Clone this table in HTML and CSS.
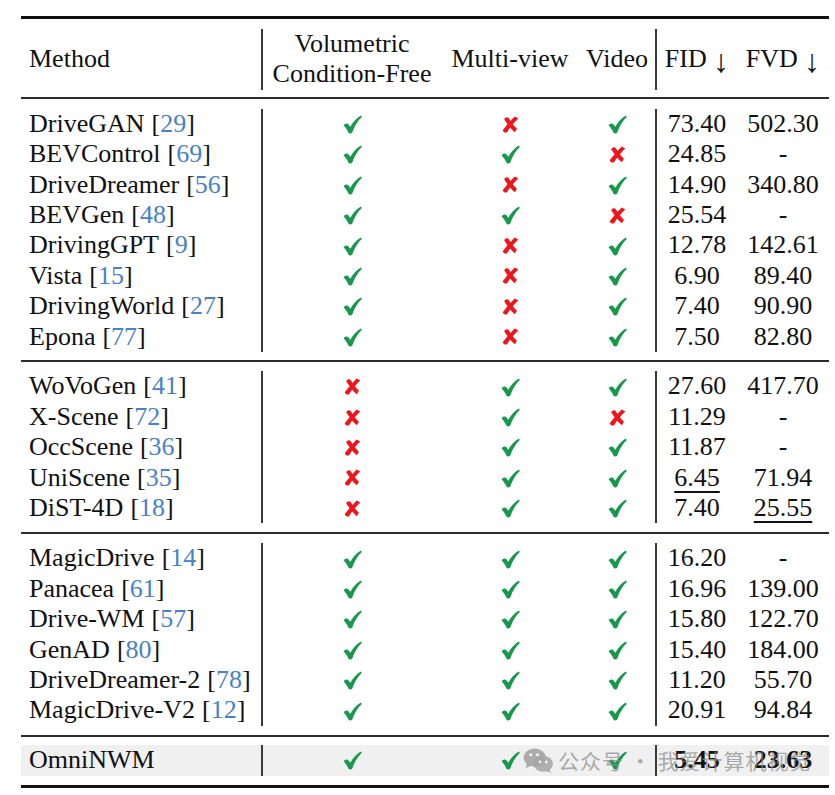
FILE: index.html
```html
<!DOCTYPE html>
<html lang="en">
<head>
<meta charset="utf-8">
<title>Comparison table</title>
<link rel="stylesheet" href="styles.css">
</head>
<body>
<svg class="defs" width="0" height="0" aria-hidden="true">
  <symbol id="ok" viewBox="0 0 20 20">
    <path d="M0.6 10.8 C2.2 9 4.2 8.4 5.4 9.6 L7.7 12.4 C10.4 7.6 13.8 3.4 18.8 0.4 L19.8 2 C15.4 6 12.2 11.2 9.8 18.4 C8.8 19.6 6.6 19.8 5.8 18.6 C4.4 15.6 2.8 13 0.6 10.8 Z"/>
  </symbol>
  <symbol id="no" viewBox="0 0 18 18">
    <path d="M0.8 15 C4.6 10.2 8.6 5.2 13.4 0.4 L17.2 2.6 C12.4 7.2 8.4 11.8 5.2 17.4 C3.4 18 1.4 17.2 0.8 15 Z"/>
    <path d="M2.4 3.6 C3.2 1 5.8 0.4 7.2 2.4 C9.6 6.4 12.2 10.2 15.8 13.6 L13.6 17.2 C9.8 14 6.6 9.8 2.4 3.6 Z"/>
  </symbol>
</svg>

<div class="page">
  <div class="table">
    <div class="head">
      <div class="row hrow">
        <div class="cell m">Method</div>
        <div class="cell c vl two">Volumetric<br>Condition-Free</div>
        <div class="cell c">Multi-view</div>
        <div class="cell c">Video</div>
        <div class="cell c vl">FID&nbsp;<span class="arr">↓</span></div>
        <div class="cell c">FVD&nbsp;<span class="arr">↓</span></div>
      </div>
    </div>

    <div class="section s1">
      <div class="row"><div class="cell m">DriveGAN <span class="ref">[<span>29</span>]</span></div><div class="cell c vl"><svg class="ok"><use href="#ok"/></svg></div><div class="cell c"><svg class="no"><use href="#no"/></svg></div><div class="cell c"><svg class="ok"><use href="#ok"/></svg></div><div class="cell c vl">73.40</div><div class="cell c">502.30</div></div>
      <div class="row"><div class="cell m">BEVControl <span class="ref">[<span>69</span>]</span></div><div class="cell c vl"><svg class="ok"><use href="#ok"/></svg></div><div class="cell c"><svg class="ok"><use href="#ok"/></svg></div><div class="cell c"><svg class="no"><use href="#no"/></svg></div><div class="cell c vl">24.85</div><div class="cell c">-</div></div>
      <div class="row"><div class="cell m">DriveDreamer <span class="ref">[<span>56</span>]</span></div><div class="cell c vl"><svg class="ok"><use href="#ok"/></svg></div><div class="cell c"><svg class="no"><use href="#no"/></svg></div><div class="cell c"><svg class="ok"><use href="#ok"/></svg></div><div class="cell c vl">14.90</div><div class="cell c">340.80</div></div>
      <div class="row"><div class="cell m">BEVGen <span class="ref">[<span>48</span>]</span></div><div class="cell c vl"><svg class="ok"><use href="#ok"/></svg></div><div class="cell c"><svg class="ok"><use href="#ok"/></svg></div><div class="cell c"><svg class="no"><use href="#no"/></svg></div><div class="cell c vl">25.54</div><div class="cell c">-</div></div>
      <div class="row"><div class="cell m">DrivingGPT <span class="ref">[<span>9</span>]</span></div><div class="cell c vl"><svg class="ok"><use href="#ok"/></svg></div><div class="cell c"><svg class="no"><use href="#no"/></svg></div><div class="cell c"><svg class="ok"><use href="#ok"/></svg></div><div class="cell c vl">12.78</div><div class="cell c">142.61</div></div>
      <div class="row"><div class="cell m">Vista <span class="ref">[<span>15</span>]</span></div><div class="cell c vl"><svg class="ok"><use href="#ok"/></svg></div><div class="cell c"><svg class="no"><use href="#no"/></svg></div><div class="cell c"><svg class="ok"><use href="#ok"/></svg></div><div class="cell c vl">6.90</div><div class="cell c">89.40</div></div>
      <div class="row"><div class="cell m">DrivingWorld <span class="ref">[<span>27</span>]</span></div><div class="cell c vl"><svg class="ok"><use href="#ok"/></svg></div><div class="cell c"><svg class="no"><use href="#no"/></svg></div><div class="cell c"><svg class="ok"><use href="#ok"/></svg></div><div class="cell c vl">7.40</div><div class="cell c">90.90</div></div>
      <div class="row"><div class="cell m">Epona <span class="ref">[<span>77</span>]</span></div><div class="cell c vl"><svg class="ok"><use href="#ok"/></svg></div><div class="cell c"><svg class="no"><use href="#no"/></svg></div><div class="cell c"><svg class="ok"><use href="#ok"/></svg></div><div class="cell c vl">7.50</div><div class="cell c">82.80</div></div>
    </div>

    <div class="section">
      <div class="row"><div class="cell m">WoVoGen <span class="ref">[<span>41</span>]</span></div><div class="cell c vl"><svg class="no"><use href="#no"/></svg></div><div class="cell c"><svg class="ok"><use href="#ok"/></svg></div><div class="cell c"><svg class="ok"><use href="#ok"/></svg></div><div class="cell c vl">27.60</div><div class="cell c">417.70</div></div>
      <div class="row"><div class="cell m">X-Scene <span class="ref">[<span>72</span>]</span></div><div class="cell c vl"><svg class="no"><use href="#no"/></svg></div><div class="cell c"><svg class="ok"><use href="#ok"/></svg></div><div class="cell c"><svg class="no"><use href="#no"/></svg></div><div class="cell c vl">11.29</div><div class="cell c">-</div></div>
      <div class="row"><div class="cell m">OccScene <span class="ref">[<span>36</span>]</span></div><div class="cell c vl"><svg class="no"><use href="#no"/></svg></div><div class="cell c"><svg class="ok"><use href="#ok"/></svg></div><div class="cell c"><svg class="ok"><use href="#ok"/></svg></div><div class="cell c vl">11.87</div><div class="cell c">-</div></div>
      <div class="row"><div class="cell m">UniScene <span class="ref">[<span>35</span>]</span></div><div class="cell c vl"><svg class="no"><use href="#no"/></svg></div><div class="cell c"><svg class="ok"><use href="#ok"/></svg></div><div class="cell c"><svg class="ok"><use href="#ok"/></svg></div><div class="cell c vl"><span class="u">6.45</span></div><div class="cell c">71.94</div></div>
      <div class="row"><div class="cell m">DiST-4D <span class="ref">[<span>18</span>]</span></div><div class="cell c vl"><svg class="no"><use href="#no"/></svg></div><div class="cell c"><svg class="ok"><use href="#ok"/></svg></div><div class="cell c"><svg class="ok"><use href="#ok"/></svg></div><div class="cell c vl">7.40</div><div class="cell c"><span class="u">25.55</span></div></div>
    </div>

    <div class="section">
      <div class="row"><div class="cell m">MagicDrive <span class="ref">[<span>14</span>]</span></div><div class="cell c vl"><svg class="ok"><use href="#ok"/></svg></div><div class="cell c"><svg class="ok"><use href="#ok"/></svg></div><div class="cell c"><svg class="ok"><use href="#ok"/></svg></div><div class="cell c vl">16.20</div><div class="cell c">-</div></div>
      <div class="row"><div class="cell m">Panacea <span class="ref">[<span>61</span>]</span></div><div class="cell c vl"><svg class="ok"><use href="#ok"/></svg></div><div class="cell c"><svg class="ok"><use href="#ok"/></svg></div><div class="cell c"><svg class="ok"><use href="#ok"/></svg></div><div class="cell c vl">16.96</div><div class="cell c">139.00</div></div>
      <div class="row"><div class="cell m">Drive-WM <span class="ref">[<span>57</span>]</span></div><div class="cell c vl"><svg class="ok"><use href="#ok"/></svg></div><div class="cell c"><svg class="ok"><use href="#ok"/></svg></div><div class="cell c"><svg class="ok"><use href="#ok"/></svg></div><div class="cell c vl">15.80</div><div class="cell c">122.70</div></div>
      <div class="row"><div class="cell m">GenAD <span class="ref">[<span>80</span>]</span></div><div class="cell c vl"><svg class="ok"><use href="#ok"/></svg></div><div class="cell c"><svg class="ok"><use href="#ok"/></svg></div><div class="cell c"><svg class="ok"><use href="#ok"/></svg></div><div class="cell c vl">15.40</div><div class="cell c">184.00</div></div>
      <div class="row"><div class="cell m">DriveDreamer-2 <span class="ref">[<span>78</span>]</span></div><div class="cell c vl"><svg class="ok"><use href="#ok"/></svg></div><div class="cell c"><svg class="ok"><use href="#ok"/></svg></div><div class="cell c"><svg class="ok"><use href="#ok"/></svg></div><div class="cell c vl">11.20</div><div class="cell c">55.70</div></div>
      <div class="row"><div class="cell m">MagicDrive-V2 <span class="ref">[<span>12</span>]</span></div><div class="cell c vl"><svg class="ok"><use href="#ok"/></svg></div><div class="cell c"><svg class="ok"><use href="#ok"/></svg></div><div class="cell c"><svg class="ok"><use href="#ok"/></svg></div><div class="cell c vl">20.91</div><div class="cell c">94.84</div></div>
    </div>

    <div class="section last">
      <div class="row ours"><div class="cell m">OmniNWM</div><div class="cell c vl"><svg class="ok"><use href="#ok"/></svg></div><div class="cell c"><svg class="ok"><use href="#ok"/></svg></div><div class="cell c"><svg class="ok"><use href="#ok"/></svg></div><div class="cell c vl"><b>5.45</b></div><div class="cell c"><b>23.63</b></div></div>
    </div>
  </div>

  <div class="watermark">
    <svg class="wechat" viewBox="0 0 32 28" aria-hidden="true">
      <ellipse cx="12" cy="11" rx="11.5" ry="9.5"/>
      <path d="M4 17 L2.5 22 L8.5 19 Z"/>
      <ellipse class="front" cx="21" cy="17.5" rx="10" ry="8.2"/>
      <path class="front" d="M27 23 L29.5 27 L23.5 24.5 Z"/>
      <circle class="eye" cx="8" cy="8" r="1.6"/>
      <circle class="eye" cx="15" cy="8" r="1.6"/>
      <circle class="eye2" cx="17.5" cy="15.5" r="1.4"/>
      <circle class="eye2" cx="24" cy="15.5" r="1.4"/>
    </svg>
    <span class="wm-text">公众号 · 我爱计算机视觉</span>
  </div>
</div>
</body>
</html>
```

FILE: styles.css
```css
* { box-sizing: border-box; }

html, body {
  margin: 0;
  background: #ffffff;
}

body {
  font-family: "Liberation Serif", "Times New Roman", serif;
  font-size: 26px;
  color: #111111;
}

.defs {
  position: absolute;
  width: 0;
  height: 0;
  overflow: hidden;
}

.page {
  position: relative;
  padding: 16px 0 0 21px;
}

.table {
  width: 808px;
  border-top: 3px solid #111111;
  border-bottom: 3px solid #111111;
}

.head {
  padding: 10px 0 7px;
  border-bottom: 2px solid #2c2c2c;
}

.section {
  padding: 9px 0 9px;
  border-bottom: 2px solid #2c2c2c;
}

.section.s1 {
  padding: 10px 0 8.5px;
}

.section.last {
  padding: 8.5px 0 9px;
  border-bottom: none;
}

.row {
  display: grid;
  grid-template-columns: 240px 180px 138px 76px 82px 92px;
  height: 30.4px;
  line-height: 30.4px;
}

.hrow {
  height: 60.8px;
}

.cell {
  white-space: nowrap;
}

.m {
  padding-left: 8px;
  display: flex;
  align-items: center;
}

.c {
  display: flex;
  align-items: center;
  justify-content: center;
  text-align: center;
}

.vl {
  border-left: 2px solid #3a3a3a;
}

.two {
  line-height: 30.4px;
}

.arr {
  font-size: 32px;
  line-height: 20px;
  position: relative;
  top: 2px;
}

.ref span {
  color: #4682c4;
}

.ref {
  margin-left: 7px;
}

.ok, .no {
  display: block;
}

.ok {
  width: 19px;
  height: 19px;
  fill: #17984c;
  margin-top: 1px;
}

.no {
  width: 17px;
  height: 17px;
  fill: #f0141c;
}

.u {
  text-decoration: underline;
  text-decoration-thickness: 1.5px;
  text-underline-offset: 5px;
}

b {
  font-weight: 700;
  position: relative;
}

.ours {
  background: #f0f0f0;
}

.watermark {
  position: absolute;
  left: 523px;
  top: 746px;
  display: flex;
  align-items: center;
  gap: 4px;
  height: 28px;
  pointer-events: none;
}

.wechat {
  width: 31px;
  height: 27px;
  fill: rgba(150, 150, 150, 0.75);
}

.wechat .front {
  fill: rgba(165, 165, 165, 0.85);
}

.wechat .eye, .wechat .eye2 {
  fill: #f4f4f4;
}

.wm-text {
  font-family: "Noto Sans CJK SC", "Noto Sans", sans-serif;
  font-size: 21px;
  letter-spacing: 1px;
  color: rgba(140, 140, 140, 0.72);
  line-height: 28px;
}
```
